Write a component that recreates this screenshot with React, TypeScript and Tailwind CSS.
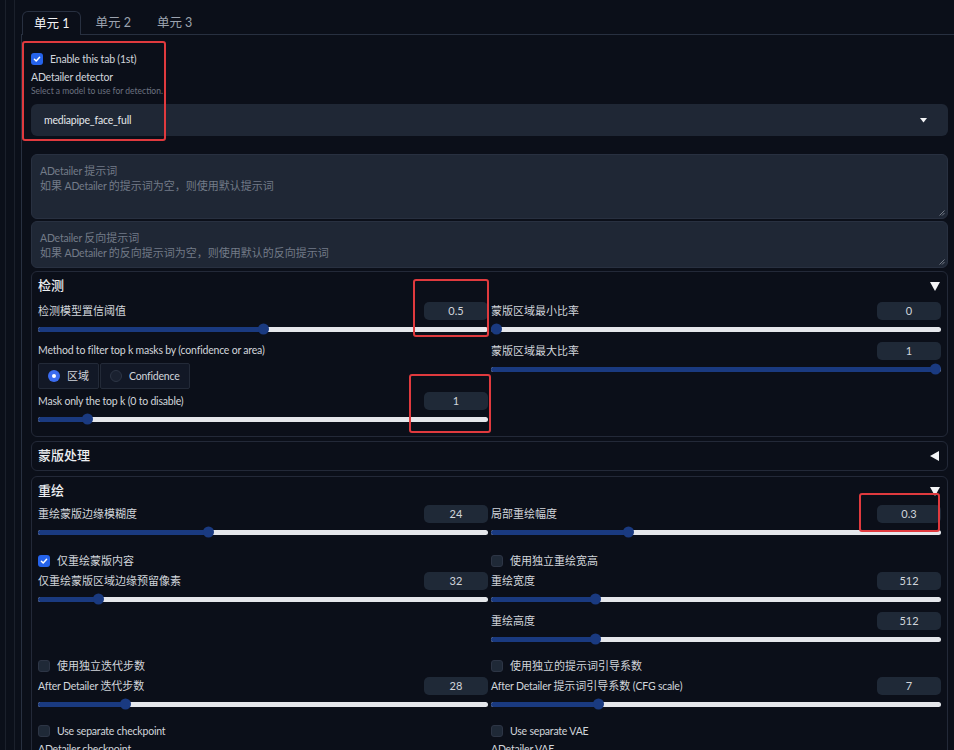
import React from 'react';

type FieldProps = { label: string; value: string; frac: number };

const CJK = /([\u3000-\u9fff\uff00-\uffef]+)/;

// Latin runs are set a touch smaller so they keep the narrow width of the original UI font
function T({ s }: { s: string }) {
  const parts = s.split(CJK).filter((p) => p !== '');
  return (
    <>
      {parts.map((p, i) =>
        CJK.test(p) ? (
          <span key={i}>{p}</span>
        ) : (
          <span key={i} className="text-[10.5px] leading-none tracking-[-0.2px]">
            {p}
          </span>
        )
      )}
    </>
  );
}

function Slider({ frac }: { frac: number }) {
  return (
    <div className="relative flex h-[18px] items-center">
      <div className="h-[5px] w-full overflow-hidden rounded-full bg-[#e5e7eb]">
        <div className="h-full bg-[#1a3a80]" style={{ width: `calc(${frac} * (100% - 11px) + 6px)` }} />
      </div>
      <div
        className="absolute top-1/2 h-[11px] w-[11px] -translate-y-1/2 rounded-full bg-[#1a3a80]"
        style={{ left: `calc(${frac} * (100% - 11px))` }}
      />
    </div>
  );
}

function SliderField({ label, value, frac }: FieldProps) {
  return (
    <div>
      <div className="flex h-[18px] items-center justify-between">
        <span className="text-[11px] text-[#d1d5db]">
          <T s={label} />
        </span>
        <div className="flex h-[18px] w-[64px] items-center justify-center rounded-[5px] bg-[#1f2937] text-[11px] text-[#d1d5db]">
          {value}
        </div>
      </div>
      <Slider frac={frac} />
    </div>
  );
}

function Check({ checked, label }: { checked?: boolean; label: string }) {
  return (
    <div className="flex h-[14px] items-center gap-[7px]">
      {checked ? (
        <div className="flex h-[12px] w-[12px] items-center justify-center rounded-[3px] bg-[#2563eb]">
          <svg width="10" height="10" viewBox="0 0 10 10">
            <path d="M2.4 5.2 L4.2 7 L7.6 3.2" fill="none" stroke="white" strokeWidth="1.5" strokeLinecap="round" strokeLinejoin="round" />
          </svg>
        </div>
      ) : (
        <div className="h-[12px] w-[12px] rounded-[3px] border border-[#2d3545] bg-[#1f2937]" />
      )}
      <span className="text-[11px] text-[#d1d5db]">
        <T s={label} />
      </span>
    </div>
  );
}

function TriDown() {
  return (
    <svg className="mr-[1px]" width="10" height="9" viewBox="0 0 10 9">
      <path d="M0 0 H10 L5 9 Z" fill="#f3f4f6" />
    </svg>
  );
}

function TriLeft() {
  return (
    <svg className="mr-[2px]" width="9" height="10" viewBox="0 0 9 10">
      <path d="M9 0 V10 L0 5 Z" fill="#f3f4f6" />
    </svg>
  );
}

function Accordion({ title, open, children }: { title: string; open?: boolean; children?: React.ReactNode }) {
  return (
    <div className="rounded-[6px] border border-[#232938] px-[6px] pt-[6px] pb-[6px]">
      <div className="flex h-[16px] items-center justify-between">
        <span className="text-[13px] font-medium text-[#eceef1]">{title}</span>
        {open ? <TriDown /> : <TriLeft />}
      </div>
      {children}
    </div>
  );
}

function PromptBox({ title, hint, tall }: { title: string; hint: string; tall?: boolean }) {
  return (
    <div
      className={`relative rounded-[6px] border border-[#283040] bg-[#1f2735] px-[8px] pt-[8px] text-[11px] leading-[15px] text-[#737b88] ${
        tall ? 'h-[65px]' : 'h-[47px]'
      }`}
    >
      <div>
        <T s={title} />
      </div>
      <div>
        <T s={hint} />
      </div>
      <svg className="absolute right-[2px] bottom-[2px]" width="6" height="6" viewBox="0 0 6 6">
        <path d="M5.5 0.5 L0.5 5.5 M5.5 3 L3 5.5" stroke="#8a919c" strokeWidth="0.8" />
      </svg>
    </div>
  );
}

function Radio({ checked, label }: { checked?: boolean; label: string }) {
  return (
    <div className="flex h-[26px] items-center gap-[7px] rounded-[2px] border border-[#232a38] bg-[#121826] pr-[9px] pl-[9px]">
      {checked ? (
        <div className="flex h-[12px] w-[12px] items-center justify-center rounded-full bg-[#3b6cf0]">
          <div className="h-[4px] w-[4px] rounded-full bg-white" />
        </div>
      ) : (
        <div className="h-[12px] w-[12px] rounded-full border border-[#2d3545] bg-[#1a2130]" />
      )}
      <span className="text-[11px] text-[#d1d5db]">
        <T s={label} />
      </span>
    </div>
  );
}

function RedBox({ cls }: { cls: string }) {
  return <div className={`pointer-events-none absolute rounded-[3px] border-2 border-[#e03a3e] ${cls}`} />;
}

export default function App() {
  return (
    <div className="relative h-[750px] w-[954px] overflow-hidden bg-[#0b0f19] pl-[5px] font-[family-name:Lato,'Noto_Sans_CJK_SC',sans-serif]">
      <div className="h-full border-l border-[#1b202b] pl-[8px]">
        <div className="h-full border-l border-[#1b202b] pl-[6px]">
          {/* Tabs */}
          <div className="flex gap-[2px] pt-[11px] pl-[1px]">
            <div className="relative -mb-px flex h-[24px] items-center rounded-t-[6px] border border-b-0 border-[#283040] bg-[#0b0f19] px-[11px] pt-[1px] text-[12.5px] text-[#f3f4f6]">
              单元 1
            </div>
            <div className="flex h-[23px] items-center px-[12px] pt-[1px] text-[12.5px] text-[#9ca3af]">单元 2</div>
            <div className="flex h-[23px] items-center px-[12px] pt-[1px] text-[12.5px] text-[#9ca3af]">单元 3</div>
          </div>

          {/* Tab panel */}
          <div className="h-full border-t border-l border-[#283040] pt-[17px] pr-[6px] pl-[9px]">
            <Check checked label="Enable this tab (1st)" />
            <div className="mt-[4px] flex h-[14px] items-center text-[11px] text-[#d1d5db]">
              <T s="ADetailer detector" />
            </div>
            <div className="mt-[1px] flex h-[12px] items-center text-[8.5px] text-[#6b7280]">
              Select a model to use for detection.
            </div>
            <div className="mt-[7px] flex h-[32px] items-center justify-between rounded-[6px] bg-[#1f2735] pr-[21px] pl-[13px]">
              <span className="text-[11px] text-[#e5e7eb]">
                <T s="mediapipe_face_full" />
              </span>
              <svg width="7" height="5" viewBox="0 0 7 5">
                <path d="M0 0 H7 L3.5 4.5 Z" fill="#f3f4f6" />
              </svg>
            </div>

            <div className="mt-[18px]">
              <PromptBox tall title="ADetailer 提示词" hint="如果 ADetailer 的提示词为空，则使用默认提示词" />
            </div>
            <div className="mt-[2px]">
              <PromptBox title="ADetailer 反向提示词" hint="如果 ADetailer 的反向提示词为空，则使用默认的反向提示词" />
            </div>

            {/* 检测 */}
            <div className="mt-[3px]">
              <Accordion title="检测" open>
                <div className="mt-[8px] grid grid-cols-2 gap-x-[3px] pb-[2px]">
                  <div>
                    <SliderField label="检测模型置信阈值" value="0.5" frac={0.5} />
                    <div className="mt-[5px] flex h-[14px] items-center text-[11px] text-[#d1d5db]">
                      <T s="Method to filter top k masks by (confidence or area)" />
                    </div>
                    <div className="mt-[6px] flex gap-[1px]">
                      <Radio checked label="区域" />
                      <Radio label="Confidence" />
                    </div>
                    <div className="mt-[3px]">
                      <SliderField label="Mask only the top k (0 to disable)" value="1" frac={0.1} />
                    </div>
                  </div>
                  <div>
                    <SliderField label="蒙版区域最小比率" value="0" frac={0} />
                    <div className="mt-[4px]">
                      <SliderField label="蒙版区域最大比率" value="1" frac={1} />
                    </div>
                  </div>
                </div>
              </Accordion>
            </div>

            {/* 蒙版处理 */}
            <div className="mt-[4px]">
              <Accordion title="蒙版处理" />
            </div>

            {/* 重绘 */}
            <div className="mt-[5px]">
              <Accordion title="重绘" open>
                <div className="mt-[6px] grid grid-cols-2 gap-x-[3px]">
                  <SliderField label="重绘蒙版边缘模糊度" value="24" frac={0.375} />
                  <SliderField label="局部重绘幅度" value="0.3" frac={0.3} />
                </div>
                <div className="mt-[13px] grid grid-cols-2 items-start gap-x-[3px]">
                  <div>
                    <Check checked label="仅重绘蒙版内容" />
                    <div className="mt-[4px]">
                      <SliderField label="仅重绘蒙版区域边缘预留像素" value="32" frac={0.125} />
                    </div>
                  </div>
                  <div>
                    <Check label="使用独立重绘宽高" />
                    <div className="mt-[4px]">
                      <SliderField label="重绘宽度" value="512" frac={0.226} />
                    </div>
                    <div className="mt-[4px]">
                      <SliderField label="重绘高度" value="512" frac={0.226} />
                    </div>
                  </div>
                </div>
                <div className="mt-[11px] grid grid-cols-2 gap-x-[3px]">
                  <div>
                    <Check label="使用独立迭代步数" />
                    <div className="mt-[4px]">
                      <SliderField label="After Detailer 迭代步数" value="28" frac={0.187} />
                    </div>
                  </div>
                  <div>
                    <Check label="使用独立的提示词引导系数" />
                    <div className="mt-[4px]">
                      <SliderField label="After Detailer 提示词引导系数 (CFG scale)" value="7" frac={0.233} />
                    </div>
                  </div>
                </div>
                <div className="mt-[11px] grid grid-cols-2 gap-x-[3px]">
                  <div>
                    <Check label="Use separate checkpoint" />
                    <div className="mt-[3px] text-[11px] text-[#d1d5db]">
                      <T s="ADetailer checkpoint" />
                    </div>
                  </div>
                  <div>
                    <Check label="Use separate VAE" />
                    <div className="mt-[3px] text-[11px] text-[#d1d5db]">
                      <T s="ADetailer VAE" />
                    </div>
                  </div>
                </div>
              </Accordion>
            </div>
          </div>
        </div>
      </div>

      {/* annotation boxes */}
      <RedBox cls="left-[22px] top-[41px] h-[100px] w-[144px]" />
      <RedBox cls="left-[413px] top-[279px] h-[58px] w-[76px]" />
      <RedBox cls="left-[409px] top-[374px] h-[59px] w-[82px]" />
      <RedBox cls="left-[859px] top-[493px] h-[39px] w-[81px]" />
    </div>
  );
}
